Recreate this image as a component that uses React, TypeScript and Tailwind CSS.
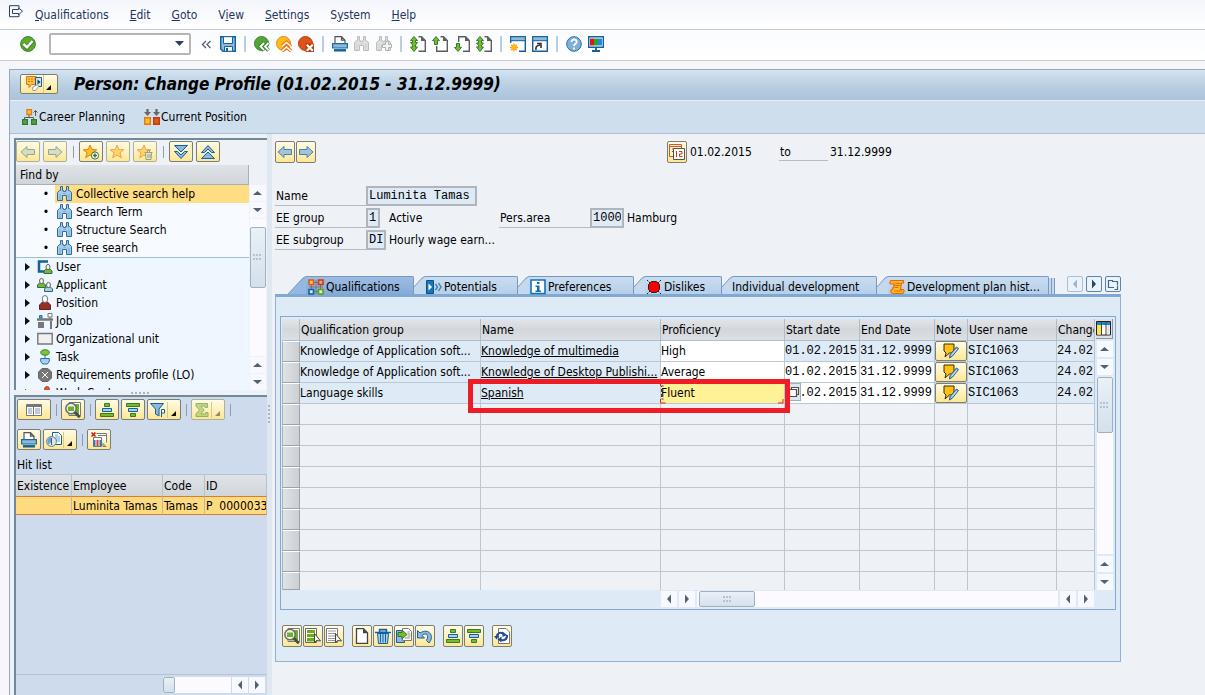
import type { ReactNode } from "react";

const svg = (children: ReactNode, w = 16, h = 16) => (
  <svg width={w} height={h} viewBox={`0 0 ${w} ${h}`} fill="none" aria-hidden="true" className="block shrink-0">
    {children}
  </svg>
);

const binoculars = (fill: string, stroke: string, extra?: ReactNode) =>
  svg(
    <>
      <path d="M3.5.5h2v4h1v1h2v-1h1v-4h2v4h1l2 2v8h-5v-5h-4v5h-5v-8l2-2h1z" fill={fill} stroke={stroke} />
      <path d="M3 14V8M12 14V8M6.500 7.500h2" stroke={stroke} opacity=".35" />
      {extra}
    </>,
  );

const upArrow = "M4 .6l3.500 4H5.500v3.900h-3V4.600H.5z";
const downArrow = "M4 15.400l3.500-4H5.500V7.500h-3v3.900H.5z";
const green = { fill: "#7cb928", stroke: "#2e7d32" };

// page outline, left open where the arrow lies
const page = (outline: string, arrow: string) =>
  svg(
    <>
      <path d={outline} fill="#fff" stroke="#5b5d61" strokeWidth="1.400" />
      <path d="M11 .8v4.200h4.500z" fill="#5b5d61" />
      <path d={arrow} {...green} />
    </>,
  );

const round = (fill: string, stroke: string, mark: ReactNode) =>
  svg(
    <>
      <circle cx="7.5" cy="7.5" r="7" fill={fill} stroke={stroke} />
      {mark}
    </>,
  );

const star = (fill: string, stroke: string) => (
  <path d="M7 1l1.800 4.500 5 .3-3.900 3 1.400 4.900L7 11l-4.300 2.700L4.100 8.800.2 5.800l5-.3z" fill={fill} stroke={stroke} />
);

const person = (x: number, y: number, body: string) => (
  <g transform={`translate(${x} ${y})`}>
    <path d="M.5 9.500V7l1.800-1.800h4.400L8.500 7v2.500z" fill={body} stroke="#2f6b54" />
    <ellipse cx="4.500" cy="3" rx="2" ry="2.600" fill="#f3f3f3" stroke="#666" />
  </g>
);

const icons = {
  command: svg(
    <path d="M11 .7H1.500v11H11M11 .7v2.300M11 9.500v2.200M4.500 4.500h6V3l4 3-4 4V8.500h-6z" stroke="#2c4166" />,
    16,
    13,
  ),
  ok: svg(
    <>
      <circle cx="8" cy="8" r="7.400" fill="#5fab2c" stroke="#3c7f33" />
      <path d="M3.500 8l3.500 3.500L13 5" stroke="#3c7f33" strokeWidth="4" />
      <path d="M3.500 8l3.500 3.300L12.500 5" stroke="#fff" strokeWidth="2.500" />
    </>,
  ),
  save: svg(
    <>
      <path d="M.7.700h14.600v14.600H3L.7 13z" fill="#8db9de" stroke="#12619b" strokeWidth="1.400" />
      <path d="M3.500.7h9v6.800h-9z" fill="#fff" stroke="#12619b" />
      <path d="M4.500 10.500h8v4.800h-8z" fill="#fff" stroke="#12619b" />
      <path d="M6 12h2v3.300H6z" fill="#12619b" />
    </>,
  ),
  back: round("#54a531", "#3a8438", (
    <>
      <path d="M10 6.500L6.500 10.500 10 14.500M14.500 6.500L11 10.500l3.500 4" stroke="#3a8438" strokeWidth="3.600" />
      <path d="M10 7l-3.500 3.500L10 14M14.500 7L11 10.500l3.500 3.500" stroke="#fff" strokeWidth="1.800" />
    </>
  )),
  exit: round("#fdbb17", "#e88a12", (
    <>
      <path d="M6 10.500l4.500-4 4.500 4M6 15l4.500-4 4.500 4" stroke="#e87413" strokeWidth="3.600" />
      <path d="M6 10.500l4.500-4 4.500 4M6 15l4.500-4 4.500 4" stroke="#fff" strokeWidth="1.600" />
    </>
  )),
  cancel: round("#de5415", "#b83c10", (
    <>
      <path d="M7.500 7.500H16V16H7.500z" fill="#b83c10" />
      <path d="M8.800 8.800l6 6M14.800 8.800l-6 6" stroke="#fff" strokeWidth="2.200" />
    </>
  )),
  print: svg(
    <>
      <path d="M3 8V.7h6.500l3.500 3.500V8M9.500.7v3.500H13" fill="#fff" stroke="#555" strokeWidth="1.200" />
      <path d="M.6 7.600h14.800v4.400H.6z" fill="#8db9de" stroke="#1a6a9e" strokeWidth="1.200" />
      <path d="M2 14.300h12" stroke="#0f5f98" strokeWidth="2.400" />
    </>,
  ),
  find: binoculars("#dedede", "#bcbcbc"),
  findNext: binoculars("#dedede", "#bcbcbc", <path d="M9.500 5.500h3v3h3v3h-3v3h-3v-3h-3v-3h3z" fill="#f3f3f3" stroke="#b0b0b0" />),
  firstPage: page("M8.500.7H11.500L15.300 4.500V15.300H8.500", "M4 .5l3.500 4h-2V6.500h2L5.500 9v2h2L4 15.500.5 11h2V9L.5 6.500h2v-2h-2z"),
  prevPage: page("M8.500.7H11.500L15.300 4.500V15.300H4.700V10", upArrow),
  nextPage: page("M4.700 6V.7H11.500L15.300 4.500V15.300H9", downArrow),
  lastPage: page("M8.500.7H11.500L15.300 4.500V15.300H8.500", "M4 .5l3.500 4h-2V7h2L5.500 9.500V11h2L4 15.500.5 11h2V9.500L.5 7h2V4.500h-2z"),
  session: svg(
    <>
      <path d="M.7.700h14.600v14.600H.7z" fill="#fff" stroke="#12619b" strokeWidth="1.400" />
      <path d="M.7.700h14.600v4H.7z" fill="#8db9de" stroke="#12619b" />
      <path d="M0 7h9v9H0z" fill="#fff" />
      <path d="M4 7.500v8M0 11.500h8M1.300 8.800l5.400 5.400M6.700 8.800l-5.400 5.400" stroke="#f69a0b" strokeWidth="1.300" />
      <circle cx="4" cy="11.500" r="2.500" fill="#ffb70f" />
    </>,
  ),
  shortcut: svg(
    <>
      <path d="M.7.700h14.600v14.600H.7z" fill="#fff" stroke="#12619b" strokeWidth="1.400" />
      <path d="M.7.700h14.600v4H.7z" fill="#8db9de" stroke="#12619b" />
      <path d="M4 14c-.5-3 .5-4.500 4-5M5 7.500h4V12" stroke="#333" strokeWidth="1.600" />
    </>,
  ),
  help: svg(
    <>
      <circle cx="8" cy="8" r="7.300" fill="#7fb0da" stroke="#2c6ea5" />
      <path d="M5.500 6c0-3.500 5.500-3.200 5.200 0C10.500 7.700 8 7.800 8 10M8 11.500v2" stroke="#fff" strokeWidth="1.800" />
    </>,
  ),
  monitor: svg(
    <>
      <path d="M.7.800h14.600v10.400H.7z" fill="#fff" stroke="#12619b" strokeWidth="1.400" />
      <path d="M2 2.500h4v7H2z" fill="#d71920" />
      <path d="M6 2.500h4v7H6z" fill="#23a437" />
      <path d="M10 2.500h4v7h-4z" fill="#2a86d8" />
      <path d="M8 11v4M4 15h8" stroke="#12619b" strokeWidth="1.800" />
    </>,
  ),
  services: svg(
    <>
      <path d="M.5.500h10v8h-5l-2.500 3v-3H.5z" fill="#fbc33b" stroke="#e2711a" />
      <path d="M2 3h7M2 5.500h6" stroke="#e2711a" strokeDasharray="2 1" />
      <path d="M9.500 1.500h6v9h-6z" fill="#cfe3f3" stroke="#14629a" />
      <path d="M11.500 3.500v5l3-2.500z" fill="#123f66" />
      <path d="M6.500 11.500l5-3 1 2-3 4H7z" fill="#fff" stroke="#999" />
    </>,
  ),
  career: svg(
    <>
      <path d="M2.500 11V8.500h9V11M7 8.500V5M13.500 7V1.500M11.500 3.500l2-2 2 2" stroke="#555" />
      <path d="M5 .5h4.500v5H5z" fill="#ffc21c" stroke="#e8761a" strokeWidth="1.300" />
      <path d="M.6 10.600h4.800v4.800H.6zM9.600 10.600h4.800v4.800H9.600z" fill="#56a52f" stroke="#2e7a33" strokeWidth="1.200" />
    </>,
  ),
  position: svg(
    <>
      <path d="M3.500 0v4M12.500 0v4" stroke="#666" strokeWidth="2.200" />
      <path d="M0 3h7L3.500 7zM9 3h7l-3.500 4z" fill="#666" />
      <path d="M.7 8.700h5.600v6.600H.7z" fill="#ffc21c" stroke="#e8761a" strokeWidth="1.400" />
      <path d="M9.700 8.700h5.600v6.600H9.700z" fill="#df5a19" stroke="#b93e12" strokeWidth="1.400" />
    </>,
  ),
  left: svg(<path d="M1 8l6-5.500V5.500h7.500v5H7v3z" fill="#a8c3d8" stroke="#4187ad" />),
  right: svg(<path d="M15 8L9 2.500V5.500H1.500v5H9v3z" fill="#a8c3d8" stroke="#4187ad" />),
  leftDim: svg(<path d="M1 8l6-5.500V5.500h7.500v5H7v3z" fill="#ccd9c8" stroke="#6f9a8f" />),
  rightDim: svg(<path d="M15 8L9 2.500V5.500H1.500v5H9v3z" fill="#ccd9c8" stroke="#6f9a8f" />),
  starAdd: svg(<>{star("#ffc31b", "#e7801a")}<circle cx="12" cy="11.500" r="3.600" fill="#fff" stroke="#35704a" /><path d="M12 9.500v4M10 11.500h4" stroke="#35704a" strokeWidth="1.500" /></>),
  star: svg(star("#ffd152", "#ea8f3a")),
  starDelete: svg(<>{star("#ffd152", "#ea8f3a")}<path d="M7.500 8.500h8M8.500 9l.5 6.500h5l.5-6.500M10.500 8V6.500h2V8M11 10v4M13 10v4" fill="#e8e8d2" stroke="#7f8f7a" /></>),
  expand: svg(<path d="M1.500 1.500h13L8 8zM1.500 7.500h3L8 11l3.500-3.500h3L8 14.500z" fill="#8db9de" stroke="#12619b" />),
  collapse: svg(<path d="M1.500 14.500h13L8 8zM1.500 8.500h3L8 5l3.500 3.500h3L8 1.500z" fill="#8db9de" stroke="#12619b" />),
  search: binoculars("#a5c9e8", "#2c6f9f"),
  user: svg(<><path d="M11 2.500H2v10h5" stroke="#12619b" strokeWidth="2.500" />{person(6.500, 5, "#74b62e")}</>),
  applicant: svg(<>{person(0, 1, "#74b62e")}{person(7, 5, "#a9cfef")}</>),
  person: svg(<><path d="M2.500 14.500v-4.500l3-3h5l3 3v4.500z" fill="#923226" stroke="#66211b" /><ellipse cx="8" cy="4" rx="2.700" ry="3.500" fill="#fff" stroke="#777" /></>),
  job: svg(
    <>
      <path d="M0 6.500h16" stroke="#777" strokeWidth="2.500" />
      <path d="M1 9h6v6H1zM13 8h2v8h-2z" fill="#777" />
      <path d="M2.500 2.500h2.500v2.500H2.500z" fill="#65a4d4" stroke="#28719f" />
      <path d="M11 .5h4v3.500h-4zM13 4v2" stroke="#777" fill="#fff" />
    </>,
  ),
  org: svg(<path d="M.8 2.500h14.400v10.500H.8z" fill="#f0f0f0" stroke="#777" strokeWidth="1.400" />),
  task: svg(
    <>
      <ellipse cx="8" cy="3.500" rx="4.300" ry="2.700" fill="#7cc52c" stroke="#33853b" />
      <path d="M8 6.500v3M3.700 9.500h8.600v3l-2 2.500H5.700l-2-2.500z" fill="#a9cfef" stroke="#2c6f9f" />
    </>,
  ),
  requirements: svg(<><path d="M5 1.500h6l3.500 3.500v6L11 14.500H5L1.500 11V5z" fill="#777" stroke="#666" /><path d="M5 5l6 6M11 5l-6 6" stroke="#fff" /></>),
  workCenter: svg(<><circle cx="10" cy="4" r="2.400" fill="#e2591a" stroke="#b5401b" /><path d="M10 6v9M4 12h12" stroke="#666" strokeWidth="1.500" /></>),
  layout: svg(
    <>
      <path d="M.5 2.500h15v11H.5z" fill="#fff" stroke="#777" />
      <path d="M1 4h14" stroke="#777" strokeWidth="2" />
      <path d="M2 7h4M2 9h4M2 11h4M9 7h5M9 9h5M9 11h5" stroke="#7d96ac" />
      <path d="M7.500 5v9" stroke="#777" />
    </>,
  ),
  detail: svg(
    <>
      <path d="M4 .5h11.500v13H4z" fill="#fff" stroke="#777" />
      <path d="M6 2h8v10.500H6z" fill="#69b229" />
      <circle cx="6" cy="6.500" r="5.200" fill="#eef3ea" stroke="#6b6b6b" strokeWidth="1.500" />
      <path d="M3 4.500h6v4.500H3z" fill="#69b229" />
      <path d="M9.800 10.300l5 5" stroke="#4c4c4c" strokeWidth="2.800" />
    </>,
  ),
  asc: svg(<><path d="M5.500 1.500h5v3h-5zM1.500 11.500h13v3h-13z" {...green} /><path d="M3.500 6.500h9v3h-9z" fill="#a9cfef" stroke="#12619b" /></>),
  desc: svg(<><path d="M5.500 11.500h5v3h-5zM1.500 1.500h13v3h-13z" {...green} /><path d="M3.500 6.500h9v3h-9z" fill="#a9cfef" stroke="#12619b" /></>),
  filter: svg(<><path d="M.5 1.500h13L9 7v7L5.500 12V7z" fill="#8db9de" stroke="#12619b" /><path d="M11.500 15V7.500h3V11h-3" stroke="#12619b" fill="#fff" /></>),
  sum: svg(<path d="M2 1.500h11.500v4H11V4H7l3 4-3 4h4.500v-1.500H14v4H2V12l3.500-4L2 4z" fill="#b8ce6e" stroke="#77a45b" />),
  views: svg(
    <>
      <path d="M6.500.5h6l3 3v9h-9z" fill="#fff" stroke="#12619b" />
      <path d="M9 3h3M9 5h5M9 7h5M9 9h5" stroke="#65a4d4" />
      <circle cx="5.500" cy="9.500" r="4.900" fill="#d6e9f6" stroke="#747474" />
      <path d="M5.500 9.500V5A4.500 4.500 0 0 0 2.500 12.500z" fill="#65a4d4" />
      <path d="M5.500 6v7" stroke="#555" />
    </>,
  ),
  config: svg(
    <>
      <path d="M5.500 1.500h10v9M2.500 5.500h8v9h-8z" fill="#fff" stroke="#777" />
      <path d="M3.500 8v6M9.500 8v6" stroke="#2b7bb8" strokeWidth="2" />
      <path d="M6.500 8v6" stroke="#d33" strokeWidth="2" />
      <path d="M.5.500l4 4M4.500.500l-4 4" stroke="#c31a14" strokeWidth="1.500" />
      <path d="M7 3.500h8M12 14.500h3l-3-3v3" stroke="#777" />
    </>,
  ),
  calendar: svg(
    <>
      <path d="M.5.500h12v12H.5z" fill="#fff3c9" stroke="#d9541e" />
      <path d="M1 2.500h11M3 5h8M3 7.500h8" stroke="#d9541e" />
      <path d="M4.500 4.500h11v11h-11z" fill="#fff" stroke="#555" />
      <path d="M7.500 7v6M10 7.500h3v2.500h-2.500v2.500h3" stroke="#c03b19" />
    </>,
  ),
  qualifications: svg(
    <>
      <path d="M6 3.500h4M6 12.500h4M3.500 6v4M12.500 6v4M8 1v14M1 8h14" stroke="#777" />
      <path d="M1 1h4.500v4.500H1z" fill="#ffd45c" stroke="#e2591a" strokeWidth="1.600" />
      <path d="M10.500 1H15v4.500h-4.500z" fill="#e9a28c" stroke="#c53d17" strokeWidth="1.600" />
      <path d="M1 10.500h4.500V15H1z" fill="#cfe6f7" stroke="#12619b" strokeWidth="1.600" />
      <path d="M10.500 10.500H15V15h-4.500z" fill="#e4f3bd" stroke="#5c9c26" strokeWidth="1.600" />
    </>,
  ),
  potentials: svg(
    <>
      <path d="M.5 1.500h7v13h-7z" fill="#1675bb" stroke="#0d5288" />
      <path d="M2.500 4.500v7L6 8z" fill="#fff" />
      <path d="M9.500 5l2 3-2 3M12.500 4l2.500 4-2.500 4" stroke="#3b7fb3" strokeWidth="1.400" />
    </>,
  ),
  info: svg(
    <>
      <path d="M1 1h14v13.500H1z" fill="#fff" stroke="#1670b5" strokeWidth="1.600" />
      <path d="M7 3h2.500v2H7zM5.500 6.500h4v5H11V13H5.500v-1.500H7V8H5.500z" fill="#1670b5" />
    </>,
  ),
  dislike: svg(
    <>
      <path d="M1 1l14 14M15 1L1 15" stroke="#222" strokeDasharray="2 1" />
      <path d="M5.500 2.500h5l3 3v5l-3 3h-5l-3-3v-5z" fill="#f00" stroke="#222" />
    </>,
  ),
  scroll: svg(
    <>
      <path d="M2.500 1.500h12v2.500h-2l-1 6.500h2.500c1.500 0 1.500 4-1 4h-9c-2.500 0-3-4-.5-4L5.500 5H2C.5 5 .5 1.500 2.500 1.500z" fill="#ffbd1d" stroke="#e76617" strokeWidth="1.200" />
      <path d="M6.500 4.500h5M6 6.500h5M5.500 8.500h4M5 12h8" stroke="#e76617" />
    </>,
  ),
  note: svg(
    <>
      <path d="M2 1h10v7l-2 2H7.500l-4.500 4L4 10 2 8z" fill="#ffc00f" stroke="#332b12" />
      <path d="M16.500 5.500L10.500 13 7.500 15l.5-3.500 6.500-7.500z" fill="#82b4dd" stroke="#2b5d86" />
      <path d="M14.800 6L9.500 12.500" stroke="#d7eaf8" />
    </>,
    18,
    16,
  ),
  columns: svg(
    <>
      <path d="M.5.500h14v13.500H.5z" fill="#fff" stroke="#222" />
      <path d="M1 1h13v3H1z" fill="#2186cf" />
      <path d="M1 4h4.500v9.500H1z" fill="#ffe24c" />
      <path d="M5.500 1v13M10 1v13" stroke="#444" />
      <path d="M12.500 4v9.500" stroke="#d5dce1" strokeWidth="2" />
    </>,
  ),
  selectAll: svg(
    <>
      <path d="M.5.500h11v14H.5z" fill="#fff" stroke="#666" />
      <path d="M2 2h8v3H2zM2 6h8v3H2zM2 10h8v3.500H2z" fill="#69ad16" />
      <path d="M9.500 5.500v9l2-2 4 .5z" fill="#fff" stroke="#444" />
    </>,
  ),
  deselect: svg(
    <>
      <path d="M.5.500h11v14H.5z" fill="#fff" stroke="#777" />
      <path d="M2 3h8M2 5.500h8M2 8h7M2 10.500h7M2 12.500h7" stroke="#999" />
      <path d="M9.500 5.500v9l2-2 4 .5z" fill="#fff" stroke="#444" />
    </>,
  ),
  create: svg(<><path d="M2.500.7h7l4 4v10.600h-11z" fill="#fff" stroke="#444" strokeWidth="1.300" /><path d="M9 .7v4.500h4.800z" fill="#444" /></>),
  trash: svg(
    <>
      <path d="M2.500 5.500h11l-1 10h-9z" fill="#a9cfef" stroke="#12619b" />
      <path d="M0 4.500h16M4.500 4V1.500h7V4" stroke="#12619b" strokeWidth="1.400" fill="#8db9de" />
      <path d="M5.500 6v8.500M8 6v8.500M10.500 6v8.500" stroke="#12619b" />
    </>,
  ),
  copy: svg(
    <>
      <path d="M.5 2.500h8v12h-8z" fill="#8db9de" stroke="#12619b" />
      <path d="M6.500.5h6l3 3v9h-9z" fill="#fff" stroke="#777" />
      <path d="M11.500 4h2M11.500 6h3M11.500 8h3M9 10h5" stroke="#888" />
      <path d="M2 4.500h4V2l5 4.500L6 11V8.500H2z" {...green} />
    </>,
  ),
  undo: svg(<path d="M.5 2.500v7.500h7L5 7.500c4-3.500 7.500-1 4.500 5l2.500 2.500C18 8 12-.5 3 5z" fill="#8db9de" stroke="#12619b" />),
  refresh: svg(
    <>
      <path d="M4.500.5h7.500l3.500 3.500v11.500h-11z" fill="#fff" stroke="#777" />
      <path d="M2.500 9c.5-4 4-5.500 7-3M13 7c.5 4.500-3.500 6.500-6.500 4.500" stroke="#25489c" strokeWidth="2" />
      <path d="M8.500 3.500l4.500 3.500-4.500 2zM7.500 8.500v6l-4-3zM0 8h5l-2.500 3.500z" fill="#25489c" />
    </>,
  ),
};

type IconName = keyof typeof icons;

const buttonLook = "flex items-center justify-center rounded-[2px] border bg-linear-to-b from-[#fffbe6] to-[#fde793]";

function IconButton({ icon, label, wide, split, dim }: { icon: IconName; label: string; wide?: boolean; split?: boolean; dim?: boolean }) {
  return (
    <button
      type="button"
      aria-label={label}
      className={`${buttonLook} h-[21px] ${wide || split ? "w-[34px]" : "w-6"} ${dim ? "border-[#b0b09a]" : "border-[#7d7d72]"}`}
    >
      <span className={dim ? "opacity-80" : ""}>{icons[icon]}</span>
      {split && (
        <svg width="12" height="18" viewBox="0 0 12 18" aria-hidden="true">
          <path d="M1.500 1v16" stroke="#d9c98a" />
          <path d="M10 10v5H5z" fill={dim ? "#8b8b74" : "#111"} />
        </svg>
      )}
    </button>
  );
}

function SmallButton({ icon, label }: { icon: IconName; label: string }) {
  return (
    <button type="button" aria-label={label} className={`${buttonLook} h-[22px] w-5 border-[#7d7d72]`}>
      {icons[icon]}
    </button>
  );
}

function Separator() {
  return <span className="mx-0.5 h-4 w-0.5 bg-[#b5cfe8]" />;
}

function Divider() {
  return <span className="mr-0.5 ml-[3px] h-3 w-px bg-[#8d9dab]" />;
}

const arrowPaths = {
  up: "M0 7l4.500-4L9 7z",
  down: "M0 3l4.500 4L9 3z",
  left: "M7 .5L3 5l4 4.500z",
  right: "M3 .5L7 5 3 9.500z",
};

function Arrow({ dir }: { dir: keyof typeof arrowPaths }) {
  return (
    <button type="button" aria-label={`Scroll ${dir}`} className="flex h-4 w-4 shrink-0 items-center justify-center bg-[#f8f9fe]">
      <svg width="10" height="10" viewBox="0 0 10 10" aria-hidden="true">
        <path d={arrowPaths[dir]} fill="#4f6372" />
      </svg>
    </button>
  );
}

function Grip() {
  return (
    <svg width="9" height="9" viewBox="0 0 9 9" aria-hidden="true">
      <path d="M0 2h9M0 6h9" stroke="#b4c3ce" strokeWidth="2" strokeDasharray="2 1" />
    </svg>
  );
}

const thumb = "flex items-center justify-center rounded-xs border border-[#9fb0c0] bg-linear-to-b from-[#e9f1f6] to-[#d5e0ec]";

const menus = [
  ["", "Q", "ualifications"],
  ["", "E", "dit"],
  ["", "G", "oto"],
  ["V", "i", "ew"],
  ["", "S", "ettings"],
  ["S", "y", "stem"],
  ["", "H", "elp"],
];

const toolbar: [IconName, string][][] = [
  [["back", "Back"], ["exit", "Exit"], ["cancel", "Cancel"]],
  [["print", "Print"], ["find", "Find"], ["findNext", "Find next"]],
  [["firstPage", "First page"], ["prevPage", "Previous page"], ["nextPage", "Next page"], ["lastPage", "Last page"]],
  [["session", "New session"], ["shortcut", "Create shortcut"]],
  [["help", "Help"], ["monitor", "Customize local layout"]],
];

const searches = ["Collective search help", "Search Term", "Structure Search", "Free search"];

const objects: [IconName, string][] = [
  ["user", "User"],
  ["applicant", "Applicant"],
  ["person", "Position"],
  ["job", "Job"],
  ["org", "Organizational unit"],
  ["task", "Task"],
  ["requirements", "Requirements profile (LO)"],
  ["workCenter", "Work Center"],
];

const tabs: { label: string; icon?: IconName; width: string }[] = [
  { label: "Qualifications", icon: "qualifications", width: "w-[126px]" },
  { label: "Potentials", icon: "potentials", width: "w-[104px]" },
  { label: "Preferences", icon: "info", width: "w-[116px]" },
  { label: "Dislikes", icon: "dislike", width: "w-[88px]" },
  { label: "Individual development", width: "w-[155px]" },
  { label: "Development plan hist...", icon: "scroll", width: "w-[172px]" },
];

const rows = [
  { group: "Knowledge of Application soft...", name: "Knowledge of multimedia", level: "High" },
  { group: "Knowledge of Application soft...", name: "Knowledge of Desktop Publishi...", level: "Average" },
  { group: "Language skills", name: "Spanish", level: "Fluent" },
];

const footerGroups: [IconName, string][][] = [
  [["detail", "Details"], ["selectAll", "Select all"], ["deselect", "Deselect all"]],
  [["create", "Create"], ["trash", "Delete"], ["copy", "Copy"], ["undo", "Undo"]],
  [["asc", "Sort ascending"], ["desc", "Sort descending"]],
  [["refresh", "Refresh"]],
];

const mono = "font-['Liberation_Mono',monospace]";

function MenuBar() {
  return (
    <nav className="flex h-[30px] items-center border-b border-[#c9cdd3] bg-linear-to-b from-[#f4f6fd] to-white pl-2 text-[#1f3560]">
      <span className="mr-[11px] mb-1.5">{icons.command}</span>
      <div className="flex gap-[21px]">
        {menus.map(([before, key, after]) => (
          <button key={after} type="button">
            {before}
            <span className="underline">{key}</span>
            {after}
          </button>
        ))}
      </div>
    </nav>
  );
}

function Toolbar() {
  return (
    <div className="flex h-[31px] items-center gap-1.5 border-b border-[#c9cdd3] bg-linear-to-b from-[#fafbff] to-white pb-0.5 pl-5">
      <button type="button" aria-label="Enter">{icons.ok}</button>
      <div className="relative ml-[7px]">
        <select aria-label="Command" className="block h-[22px] w-[142px] appearance-none rounded-xs border-2 border-[#b4b6ba] bg-white">
          <option />
        </select>
        <svg width="9" height="5" viewBox="0 0 9 5" className="pointer-events-none absolute top-2 right-[7px]" aria-hidden="true">
          <path d="M0 0h9L4.500 5z" fill="#2c4166" />
        </svg>
      </div>
      <button type="button" aria-label="Hide command field" className="mr-[3px] ml-1">
        {svg(<path d="M5 1L1.500 4.500 5 8M9.500 1L6 4.500 9.500 8" stroke="#5a6472" strokeWidth="1.400" />, 10, 9)}
      </button>
      <button type="button" aria-label="Save">{icons.save}</button>
      {toolbar.map((group, i) => (
        <div key={i} className="flex items-center gap-1.5">
          <Separator />
          {group.map(([icon, label]) => (
            <button key={label} type="button" aria-label={label}>{icons[icon]}</button>
          ))}
        </div>
      ))}
    </div>
  );
}

function SearchTree() {
  return (
    <section className="border-t-2 border-l-2 border-[#6f8b9b] bg-[#eef1f6]">
      <div className="flex items-center gap-[3px] py-px">
        <IconButton icon="leftDim" label="Previous" dim />
        <IconButton icon="rightDim" label="Next" dim />
        <Divider />
        <IconButton icon="starAdd" label="Add favorite" />
        <IconButton icon="star" label="Favorites" dim />
        <IconButton icon="starDelete" label="Delete favorite" dim />
        <Divider />
        <IconButton icon="expand" label="Expand all" />
        <IconButton icon="collapse" label="Collapse all" />
      </div>
      <div className="flex">
        <div className="min-w-0 flex-1">
          <h2 className="mt-0.5 flex h-5 items-center border-r border-b border-[#a5b1bb] bg-linear-to-b from-[#e0e4e8] to-[#d0d5da] pt-px pl-1">Find by</h2>
          <ul className="border-b border-[#9fbfcb] bg-[#f7faff]">
            {searches.map((text, i) => (
              <li key={text} className="flex h-[18px] items-center">
                <span className="flex w-[39px] justify-end pr-1.5">•</span>
                <span className={`flex h-full flex-1 items-center gap-[3px] pl-0.5 ${i === 0 ? "bg-[#ffdd83]" : ""}`}>
                  {icons.search}
                  {text}
                </span>
              </li>
            ))}
          </ul>
          <ul className="h-[132px] overflow-hidden bg-[#eef7ff]">
            {objects.map(([icon, text]) => (
              <li key={text} className="flex h-[18px] items-center pl-2">
                {svg(<path d="M1 1l5 4-5 4z" fill="#111" />, 8, 10)}
                <span className="mr-[3px] ml-[5px]">{icons[icon]}</span>
                {text}
              </li>
            ))}
          </ul>
        </div>
        <div className="mr-px flex w-[17px] flex-col items-center gap-px pt-[22px]">
          <Arrow dir="up" />
          <Arrow dir="down" />
          <div className="flex w-4 flex-1 flex-col bg-[#fdfaff] pt-2">
            <div className={`${thumb} h-[61px]`}>
              <Grip />
            </div>
          </div>
          <Arrow dir="up" />
          <Arrow dir="down" />
        </div>
      </div>
    </section>
  );
}

function HitList() {
  const head = "h-[21px] overflow-hidden border-r border-[#b5c2cf] bg-linear-to-b from-[#e0e4e8] to-[#d0d5da] pt-px pl-px text-left font-normal whitespace-nowrap";
  const cell = "h-[19px] overflow-hidden border-y border-r border-y-[#e07b2d] border-r-[#b9b9a5] bg-[#ffdb80] pl-px whitespace-nowrap";
  return (
    <section className="flex flex-1 flex-col overflow-hidden border-t-2 border-l-2 border-[#6f8b9b] bg-[#cedbed]">
      <div className="flex items-center gap-0.5 pt-0.5 pl-px">
        <IconButton icon="layout" label="Choose layout" wide />
        <Divider />
        <IconButton icon="detail" label="Details" />
        <Divider />
        <IconButton icon="asc" label="Sort ascending" />
        <IconButton icon="desc" label="Sort descending" />
        <IconButton icon="filter" label="Filter" split />
        <Divider />
        <IconButton icon="sum" label="Total" split dim />
        <Divider />
      </div>
      <div className="flex items-center gap-0.5 pt-[9px] pb-[3px] pl-px">
        <IconButton icon="print" label="Print" />
        <IconButton icon="views" label="Views" split />
        <Divider />
        <IconButton icon="config" label="Layout settings" />
      </div>
      <h2 className="flex h-[22px] items-center border-b border-[#b3c3d3] pt-0.5 pl-px">Hit list</h2>
      <table className="w-full table-fixed border-separate border-spacing-0">
        <thead>
          <tr>
            <th className={`${head} w-14`}>Existence</th>
            <th className={`${head} w-[91px]`}>Employee</th>
            <th className={`${head} w-[42px]`}>Code</th>
            <th className={head}>ID</th>
          </tr>
        </thead>
        <tbody>
          <tr>
            <td className={cell} />
            <td className={cell}>Luminita Tamas</td>
            <td className={cell}>Tamas</td>
            <td className={`${cell} whitespace-pre`}>P  0000033</td>
          </tr>
        </tbody>
      </table>
      <div className="mt-auto mb-0.5 flex justify-end gap-px border-t border-[#b3c3d3] pt-0.5 pr-0.5">
        <div className="w-17 bg-[#fdfaff]">
          <div className={`${thumb} h-4 w-3`} />
        </div>
        <Arrow dir="left" />
        <Arrow dir="right" />
      </div>
    </section>
  );
}

const labelLook = "flex h-5 w-[91px] items-center border-b border-[#b7bbc2] pt-px pl-px";
const fieldLook = `h-5 border-2 border-[#b0b5bb] bg-[#deeaf5] px-px ${mono}`;

function ProfileHeader() {
  return (
    <div className="flex flex-col gap-0.5">
      <div className="flex">
        <label htmlFor="name" className={labelLook}>Name</label>
        <input id="name" readOnly value="Luminita Tamas" className={`${fieldLook} w-[111px]`} />
      </div>
      <div className="flex items-center">
        <label htmlFor="group" className={labelLook}>EE group</label>
        <input id="group" readOnly value="1" className={`${fieldLook} w-3.5`} />
        <span className="w-[119px] pl-[9px]">Active</span>
        <label htmlFor="area" className={labelLook}>Pers.area</label>
        <input id="area" readOnly value="1000" className={`${fieldLook} w-[34px]`} />
        <span className="pl-[3px]">Hamburg</span>
      </div>
      <div className="flex items-center">
        <label htmlFor="subgroup" className={labelLook}>EE subgroup</label>
        <input id="subgroup" readOnly value="DI" className={`${fieldLook} w-5`} />
        <span className="pl-[3px]">Hourly wage earn...</span>
      </div>
    </div>
  );
}

function TabStrip() {
  return (
    <div className="flex max-w-[846px] items-end justify-between">
      <div role="tablist" className="flex pl-[13px]">
        {tabs.map((tab, i) => (
          <button key={tab.label} type="button" role="tab" aria-selected={i === 0} className={`relative flex h-[18px] ${tab.width}`}>
            <svg width={i === 0 ? 18 : 11} height="18" viewBox={i === 0 ? "0 0 18 18" : "0 0 11 18"} className="shrink-0" aria-hidden="true">
              <path d={i === 0 ? "M0 18L15 2l3-1.500V18z" : "M0 18V11L8 2l3-1.500V18z"} fill={i === 0 ? "#95b7e0" : "#c4d9ee"} />
              <path d={i === 0 ? "M0 18L15 2l3-1.500" : "M0 11L8 2l3-1.500"} stroke="#7899bd" fill="none" />
            </svg>
            <span className={`h-full flex-1 rounded-tr-xs border-t border-r border-[#7899bd] bg-linear-to-b ${i === 0 ? "from-[#9dbce2] to-[#86abd9]" : "from-[#c9ddf0] to-[#b5cfe9]"}`} />
            <span className={`absolute inset-y-0 flex items-center gap-0.5 pt-[3px] whitespace-nowrap ${i === 0 ? "left-5" : tab.icon ? "left-3" : "left-2.5"}`}>
              {tab.icon && icons[tab.icon]}
              {tab.label}
            </span>
          </button>
        ))}
        <span className="h-4 w-[3px] self-end border-r border-[#7899bd] bg-[#c4d9ee]" />
        <span className="h-4 w-[3px] self-end border-r border-[#7899bd] bg-[#c4d9ee]" />
      </div>
      <div className="mb-0.5 flex gap-[3px]">
        {(["left", "right", "list"] as const).map((kind) => (
          <button
            key={kind}
            type="button"
            aria-label={kind === "list" ? "Tab list" : `Scroll tabs ${kind}`}
            className={`flex h-4 w-4 items-center justify-center rounded-xs border bg-[#eaf2fa] ${kind === "left" ? "border-[#a9bfd6]" : "border-[#5d84ad]"}`}
          >
            {kind === "list"
              ? svg(<path d="M8 9.500H2.500v-7h4v1h5v4M11.500 8v3.500H8.500" stroke="#44678f" strokeWidth="1.200" />, 14, 13)
              : svg(<path d={arrowPaths[kind]} fill={kind === "left" ? "#9fb5cc" : "#26456c"} />, 10, 10)}
          </button>
        ))}
      </div>
    </div>
  );
}

function QualificationTable() {
  const head = "h-[22px] truncate border-r border-b border-[#aebdca] bg-linear-to-b from-[#e2e5e9] via-[#d3d7db] to-[#dcdfe3] pl-px text-left font-normal";
  const cell = "h-[21px] border-r border-b border-[#b9c8d4] p-0 whitespace-nowrap";
  const selector = "border-t border-r border-b border-l border-t-white border-r-[#9ba2a8] border-b-[#9ba2a8] border-l-[#aab3ba] bg-linear-to-r from-[#e0e3e6] to-[#cacfd3] p-0";
  const filled = "bg-[#deeaf5]";
  return (
    <table className="w-[813px] table-fixed border-separate border-spacing-0">
      <thead>
        <tr>
          <th className={`${head} w-[18px]`} />
          <th className={`${head} w-[181px] pl-0.5`}>Qualification group</th>
          <th className={`${head} w-[180px]`}>Name</th>
          <th className={`${head} w-[124px]`}>Proficiency</th>
          <th className={`${head} w-[75px]`}>Start date</th>
          <th className={`${head} w-[75px]`}>End Date</th>
          <th className={`${head} w-[33px]`}>Note</th>
          <th className={`${head} w-[89px]`}>User name</th>
          <th className={`${head} text-clip`}>Change</th>
        </tr>
      </thead>
      <tbody>
        {rows.map((row, i) => {
          const last = i === 2;
          return (
            <tr key={i}>
              <td className={selector} />
              <td className={`${cell} ${filled}`}>{row.group}</td>
              <td className={`${cell} ${filled} relative`}>
                <a href="#" className="underline">{row.name}</a>
                {last && <span className="pointer-events-none absolute -top-1 -left-[13px] z-10 h-[34px] w-[322px] border-5 border-[#ee1c25]" />}
              </td>
              <td className={`${cell} relative ${last ? "bg-[#fff196]" : "bg-white"}`}>
                {row.level}
                {last && (
                  <svg width="124" height="21" viewBox="0 0 124 21" fill="none" className="absolute top-0 -left-px" aria-hidden="true">
                    <path d="M.5 0v3M.5 16v4h5M118 20h5v-4" stroke="#ee1c25" />
                    <path d="M3.500 3h-2v13h2" stroke="#25395c" strokeDasharray="3 2" />
                  </svg>
                )}
              </td>
              <td className={`${cell} relative ${mono} ${i === 0 ? filled : "bg-white"}`}>
                01.02.2015
                {last && (
                  <button type="button" aria-label="Choose date" className="absolute top-0 left-0 flex h-[18px] w-4 items-center justify-center border border-[#9fb0c0] bg-[#dce6f0]">
                    {svg(<path d="M4.500 3.500v-2h7v7h-2M2.500 3.500h7v7h-7z" stroke="#554b45" strokeWidth="1.200" fill="#fff" />, 13, 12)}
                  </button>
                )}
              </td>
              <td className={`${cell} ${mono} ${i === 0 ? filled : "bg-white"}`}>31.12.9999</td>
              <td className={`${cell} ${filled}`}>
                <button type="button" aria-label="Note" className={`${buttonLook} h-5 w-8 border-[#7d7d72]`}>{icons.note}</button>
              </td>
              <td className={`${cell} ${mono} ${filled}`}>SIC1063</td>
              <td className={`${cell} ${mono} ${filled}`}>24.02</td>
            </tr>
          );
        })}
        {Array.from({ length: 9 }, (_, r) => (
          <tr key={r}>
            {Array.from({ length: 9 }, (_, c) => (
              <td
                key={c}
                className={`${r === 8 ? "h-[18px]" : "h-[21px]"} ${c === 0 ? selector : r === 8 ? "border-r border-[#b9c8d4] bg-[#eef1f6] p-0" : "border-r border-b border-[#b9c8d4] bg-[#eef1f6] p-0"}`}
              />
            ))}
          </tr>
        ))}
      </tbody>
    </table>
  );
}

function QualificationsPanel() {
  return (
    <section className="max-w-[846px] border border-t-[3px] border-[#8fb2d8] border-t-[#7fa8d2] bg-[#deeaf5] px-1 pb-3.5">
      <div className="mt-[19px] border border-[#86a8d0] pt-0.5 pl-px">
        <div className="flex">
          <div className="min-w-0 overflow-hidden">
            <QualificationTable />
          </div>
          <div className="ml-px flex w-[17px] shrink-0 flex-col items-center gap-0.5">
            <button type="button" aria-label="Table settings" className="flex h-5 w-[17px] items-center justify-center border-r border-b border-[#8a97a3] bg-[#dde1e6]">
              {icons.columns}
            </button>
            <Arrow dir="up" />
            <Arrow dir="down" />
            <div className="w-4 flex-1 bg-[#fdfaff]">
              <div className={`${thumb} h-14`}>
                <Grip />
              </div>
            </div>
            <Arrow dir="up" />
            <Arrow dir="down" />
          </div>
        </div>
        <div className="mr-[21px] ml-[379px] flex items-center gap-0.5 pt-px pb-0.5">
          <Arrow dir="left" />
          <Arrow dir="right" />
          <div className="flex-1 bg-[#fdfaff] pl-0.5">
            <div className={`${thumb} h-4 w-14`}>
              <Grip />
            </div>
          </div>
          <Arrow dir="left" />
          <Arrow dir="right" />
        </div>
      </div>
      <div className="mt-[15px] flex gap-2 pl-0.5">
        {footerGroups.map((group, i) => (
          <div key={i} className="flex gap-px">
            {group.map(([icon, label]) => (
              <SmallButton key={label} icon={icon} label={label} />
            ))}
          </div>
        ))}
      </div>
    </section>
  );
}

export default function App() {
  return (
    <div className="flex min-h-screen flex-col bg-[#f5f7fb] font-['DejaVu_Sans_Condensed','DejaVu_Sans',sans-serif] text-[12px] leading-4 text-black">
      <MenuBar />
      <Toolbar />
      <div className="mt-2 ml-[9px] flex flex-1 flex-col border-t border-l border-[#96a9c0] bg-[#eef1f6]">
        <header className="flex h-[31px] items-center border-b border-[#e9f1f8] bg-linear-to-b from-[#d5e3f0] via-[#b9cfe2] to-[#abc4db] pb-0.5 pl-2.5">
          <button type="button" aria-label="Services" className={`${buttonLook} h-5 w-[38px] justify-between border-[#7d7d72] pl-0.5`}>
            {icons.services}
            {svg(<><path d="M1.500 0v18" stroke="#d9c98a" /><path d="M9 10v5H4z" fill="#111" /></>, 12, 18)}
          </button>
          <h1 className="ml-4 text-[17px] font-bold italic">Person: Change Profile (01.02.2015 - 31.12.9999)</h1>
        </header>
        <div className="flex h-[33px] items-center gap-[19px] border-b border-[#aebfd2] bg-[#cedeed] pl-3">
          <button type="button" className="flex items-center gap-px">{icons.career}Career Planning</button>
          <button type="button" className="flex items-center gap-px">{icons.position}Current Position</button>
        </div>
        <div className="flex flex-1">
          <aside className="flex w-[257px] shrink-0 flex-col pt-1 pl-1">
            <SearchTree />
            <div className="flex h-[5px] items-center justify-center">
              {svg(<path d="M0 1h19" stroke="#a9b3bd" strokeWidth="2" strokeDasharray="2 2" />, 19, 2)}
            </div>
            <HitList />
          </aside>
          <div className="flex w-[5px] shrink-0 items-center bg-[#dfe7f1] pl-px">
            {svg(<path d="M1 0v19" stroke="#a9b3bd" strokeWidth="2" strokeDasharray="2 2" />, 2, 19)}
          </div>
          <main className="min-w-0 flex-1 pt-[7px] pl-[3px]">
            <div className="flex items-center">
              <div className="flex w-[392px] gap-px">
                <SmallButton icon="left" label="Previous object" />
                <SmallButton icon="right" label="Next object" />
              </div>
              <SmallButton icon="calendar" label="Choose period" />
              <span className="w-[92px] pl-[3px]">01.02.2015</span>
              <span className="w-[49px] border-b border-[#b7bbc2] pl-px">to</span>
              <span className="pl-0.5">31.12.9999</span>
            </div>
            <div className="mt-[23px] mb-[26px]">
              <ProfileHeader />
            </div>
            <TabStrip />
            <QualificationsPanel />
          </main>
        </div>
      </div>
    </div>
  );
}
